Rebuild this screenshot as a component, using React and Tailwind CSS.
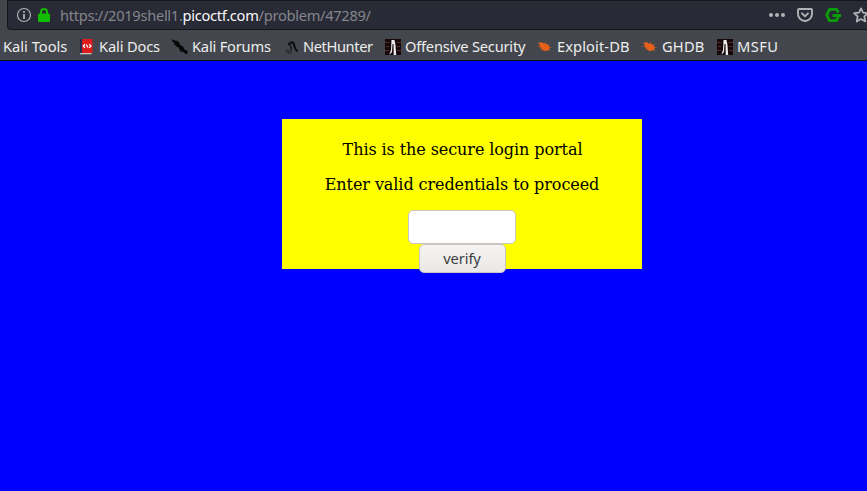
function DocsIcon() {
  return (
    <svg width="16" height="16" viewBox="0 0 16 16" className="shrink-0">
      <path d="M1 0h2v14H1z" fill="#252c4d" />
      <path d="M3 0h10.500v14H3z" fill="#dd1b1b" />
      <path d="M1 14h11.500v1.300H1z" fill="#c9c4c4" />
      <path d="M6 5.200 4.300 7 6 8.800M10.300 5.200 12 7l-1.700 1.800M7.300 5.500l1.700 3" stroke="#fff" strokeWidth="1.300" fill="none" />
    </svg>
  );
}

function ForumsIcon() {
  return (
    <svg width="16" height="16" viewBox="0 0 16 16" className="shrink-0">
      <path d="M0 0l2 1.500 3 .2L7.500 4l.5 2 3 1.500 1.500 3 3 1.500.3 2-2 1.300-2-2.300-3.300-1-2-3.500L3.500 7 2 3.500 0 2z" fill="#060606" />
      <path d="M1 4l3 3M7.500 12l3 1.500M5 2l2 1" stroke="#292c30" />
    </svg>
  );
}

function HunterIcon() {
  return (
    <svg width="16" height="16" viewBox="0 0 16 16" className="shrink-0" fill="none">
      <path d="M2 12.800q4 .5 6.500-.6M3 10.800l3 .3M5 14h4" stroke="#24272a" />
      <path d="M5.500 6.200C6.300 3 9.800 2.300 10.800 5c.8 2.500.8 5 3.700 7.500" stroke="#0b0c0d" strokeWidth="2" />
      <path d="M7.500 5.500c-.5 2.500 2 4 0 6" stroke="#111315" strokeWidth="1.300" />
    </svg>
  );
}

function OffsecIcon() {
  return (
    <svg width="16" height="16" viewBox="0 0 16 16" className="shrink-0">
      <path d="M0 0h16v16H0z" fill="#160709" />
      <path d="M0 3.500h4.500M1 7.500h3M0 11.500h4M11.500 3.500H16M12 7.500h3M12 11.500h4" stroke="#542a2e" strokeWidth="1.200" />
      <path d="M6.500 1h3l1 5 .7 10H8.700L8.500 5h-1L7 13l-2.200 2.500-.3-.5L6 11z" fill="#eeecec" />
    </svg>
  );
}

function BugIcon() {
  return (
    <svg width="16" height="16" viewBox="0 0 16 16" className="shrink-0">
      <path d="M1 3.200l2 .5L5 3l1 1.300c3-.3 6 1.700 7 4.200l-.7 2.200-3.300 1.200c-2.800-.2-5-1.700-6-4L2.500 5.500z" fill="#e8611a" />
      <path d="M.5 7.500h4M3.500 10.500l2.500-1M6.500 12.500l1.500-2M9 2.500l-1 3M12.500 5l-2.500 1.500M14.500 8.500H11M13 12l-2.500-2" stroke="#c9571f" strokeWidth="0.700" />
    </svg>
  );
}

function Bookmark({ icon, label, width, spacing = "" }) {
  return (
    <div className={`flex shrink-0 items-center gap-1 ${width}`}>
      {icon}
      <span className={`whitespace-nowrap pb-0.5 ${spacing}`}>{label}</span>
    </div>
  );
}

export default function App() {
  return (
    <div className="flex h-[491px] w-[867px] flex-col overflow-hidden bg-[#0000ff]">
      <header className="flex h-[61px] shrink-0 flex-col border-b border-[#101114] bg-[#43474d] font-['Noto_Sans',sans-serif] text-[14.67px] leading-[22px]">
        <div className="ml-[7px] flex h-[30px] shrink-0 items-center rounded-bl-[4px] border-y border-l border-[#15161a] bg-[#282a35] pl-2">
          <svg width="16" height="16" viewBox="0 0 16 16" className="shrink-0" fill="none" stroke="#b0b1b5">
            <circle cx="8" cy="8" r="6.500" strokeWidth="1.200" />
            <path d="M8 7v5M8 4v1.800" strokeWidth="1.800" />
          </svg>
          <svg width="14" height="16" viewBox="0 0 14 16" className="ml-[5px] shrink-0">
            <path d="M1 7.500q0-1 1-1h10q1 0 1 1V14q0 1-1 1H2q-1 0-1-1z" fill="#12bc00" />
            <path d="M4 7V5a3 3 0 0 1 6 0v2" fill="none" stroke="#12bc00" strokeWidth="2" />
          </svg>
          <div className="ml-[9px] w-[708px] shrink-0 whitespace-nowrap tracking-[-0.3px] text-[#85868d]">
            https://2019shell1.<span className="text-[#f9f9fa]">picoctf.com</span>/problem/47289/
          </div>
          <svg width="18" height="16" viewBox="0 0 18 16" className="shrink-0" fill="#b1b2b6">
            <circle cx="3" cy="8" r="2" />
            <circle cx="9" cy="8" r="2" />
            <circle cx="15" cy="8" r="2" />
          </svg>
          <svg width="16" height="16" viewBox="0 0 16 16" className="ml-[11px] shrink-0" fill="none" stroke="#b1b2b6" strokeWidth="1.900" strokeLinecap="round" strokeLinejoin="round">
            <path d="M2 2h12q1 0 1 1v4a7 7 0 0 1-14 0V3q0-1 1-1z" />
            <path d="m5 6.300 3 3 3-3" />
          </svg>
          <svg width="16" height="16" viewBox="0 0 16 16" className="ml-3 shrink-0" fill="none" stroke="#0c9d0a" strokeWidth="2.800">
            <path d="M13.500 5.500 11.500 2.300h-7L1.800 8l2.700 5.700h7l2-4.700M7.500 8.500H16" />
          </svg>
          <svg width="16" height="16" viewBox="0 0 16 16" className="ml-3 shrink-0" fill="none" stroke="#b1b2b6" strokeWidth="1.700" strokeLinejoin="round">
            <path d="m8 1.300 2 4.400 5 .5-3.700 3.300 1 5L8 12l-4.300 2.500 1-5L1 6.200l5-.5z" />
          </svg>
        </div>
        <nav className="flex h-[30px] shrink-0 items-center pl-[3px] pt-[3px] text-[#eeeeee]">
          <Bookmark label="Kali Tools" width="w-[76px]" />
          <Bookmark icon={<DocsIcon />} label="Kali Docs" width="w-[93px]" spacing="tracking-[-0.15px]" />
          <Bookmark icon={<ForumsIcon />} label="Kali Forums" width="w-[111px]" spacing="tracking-[-0.2px]" />
          <Bookmark icon={<HunterIcon />} label="NetHunter" width="w-[102px]" spacing="tracking-[-0.4px]" />
          <Bookmark icon={<OffsecIcon />} label="Offensive Security" width="w-[152px]" spacing="tracking-[-0.22px]" />
          <Bookmark icon={<BugIcon />} label="Exploit-DB" width="w-[105px]" spacing="tracking-[0.1px]" />
          <Bookmark icon={<BugIcon />} label="GHDB" width="w-[75px]" spacing="tracking-[0.2px]" />
          <Bookmark icon={<OffsecIcon />} label="MSFU" width="w-[70px]" spacing="tracking-[0.4px]" />
        </nav>
      </header>
      <main className="ml-[282px] mt-[58px] flex h-[150px] w-[360px] shrink-0 flex-col items-center bg-[#ffff00] pt-[21px] font-['DejaVu_Serif',serif] text-[16px] leading-[19px] tracking-[-0.08px] text-black">
        <p className="pl-px">This is the secure login portal</p>
        <p className="mt-4">Enter valid credentials to proceed</p>
        <input type="password" aria-label="Password" className="mt-4 h-[34px] w-[108px] shrink-0 rounded-[5px] border border-[#c9c5c1] bg-white px-2 outline-none" />
        <button className="h-[29px] w-[87px] shrink-0 rounded-[5px] border border-[#c9c5c1] bg-linear-to-b from-[#f5f4f3] to-[#e9e8e7] pb-0.5 font-['Noto_Sans',sans-serif] text-[14.67px] leading-[20px] tracking-[-0.1px] text-[#3b3e40]">verify</button>
      </main>
    </div>
  );
}
